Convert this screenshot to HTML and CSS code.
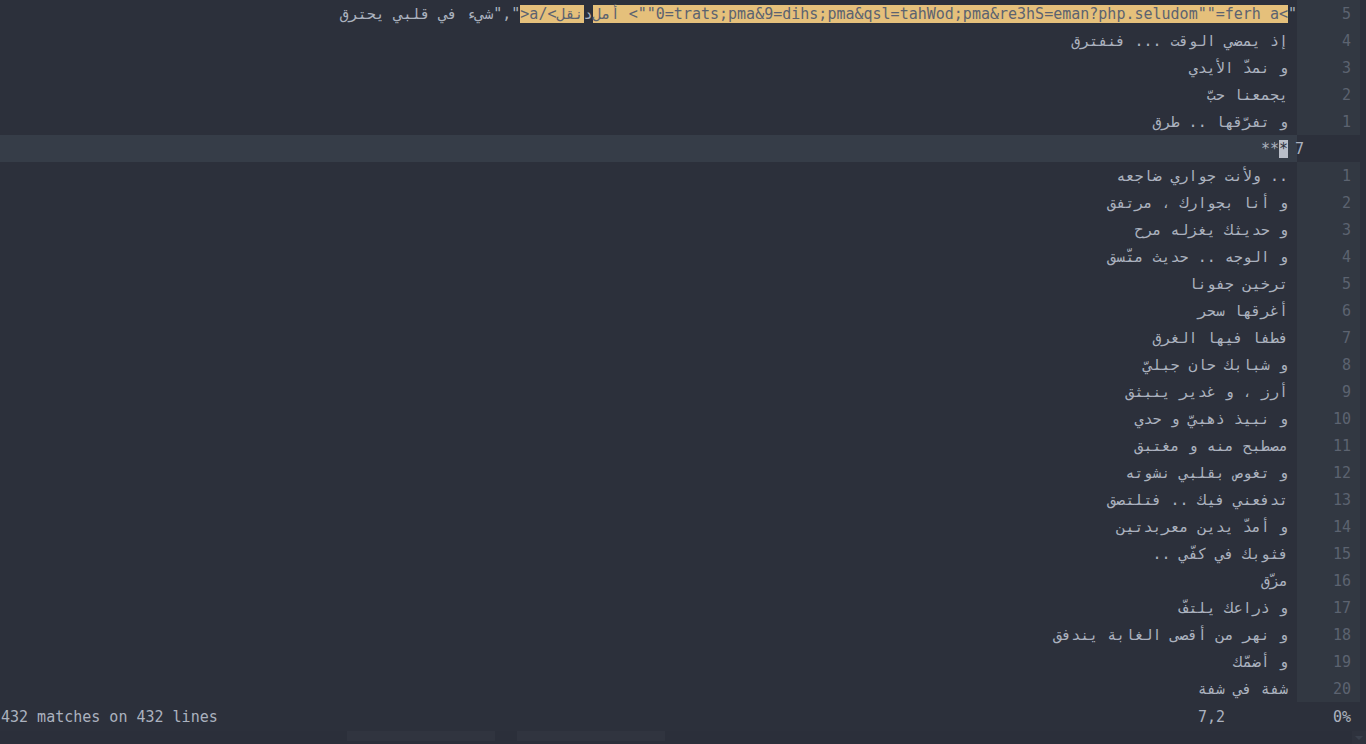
FILE: index.html
```html
<!DOCTYPE html>
<html lang="ar">
<head>
<meta charset="utf-8">
<title>vim</title>
<link rel="stylesheet" href="styles.css">
</head>
<body>
<div class="editor">
  <div class="row"><div class="text mixed"><span class="ar">شيء في قلبي يحترق</span>","<span class="hl">&gt;a/&lt;<span class="ar">نقل</span></span><span class="ar">د</span><span class="hl"><span class="ar">أمل</span> &lt;""0=trats;pma&amp;9=dihs;pma&amp;qsl=tahWod;pma&amp;re3hS=eman?php.seludom""=ferh a&lt;</span>"</div><div class="num">5</div></div>
  <div class="row"><div class="text"> إذ يمضي الوقت ... فنفترق</div><div class="num">4</div></div>
  <div class="row"><div class="text"> و نمدّ الأيدي</div><div class="num">3</div></div>
  <div class="row"><div class="text"> يجمعنا حبّ</div><div class="num">2</div></div>
  <div class="row"><div class="text"> و تفرّقها .. طرق</div><div class="num">1</div></div>
  <div class="row cursorline"><div class="text"> <span class="cursor">*</span>**</div><div class="num">7</div></div>
  <div class="row"><div class="text"> .. ولأنت جواري ضاجعه</div><div class="num">1</div></div>
  <div class="row"><div class="text"> و أنا بجوارك ، مرتفق</div><div class="num">2</div></div>
  <div class="row"><div class="text"> و حديثك يغزله مرح</div><div class="num">3</div></div>
  <div class="row"><div class="text"> و الوجه .. حديث متّسق</div><div class="num">4</div></div>
  <div class="row"><div class="text"> ترخين جفونا</div><div class="num">5</div></div>
  <div class="row"><div class="text"> أغرقها سحر</div><div class="num">6</div></div>
  <div class="row"><div class="text"> فطفا فيها الغرق</div><div class="num">7</div></div>
  <div class="row"><div class="text"> و شبابك حان جبليّ</div><div class="num">8</div></div>
  <div class="row"><div class="text"> أرز ، و غدير ينبثق</div><div class="num">9</div></div>
  <div class="row"><div class="text"> و نبيذ ذهبيّ و حدي</div><div class="num">10</div></div>
  <div class="row"><div class="text"> مصطبح منه و مغتبق</div><div class="num">11</div></div>
  <div class="row"><div class="text"> و تغوص بقلبي نشوته</div><div class="num">12</div></div>
  <div class="row"><div class="text"> تدفعني فيك .. فتلتصق</div><div class="num">13</div></div>
  <div class="row"><div class="text"> و أمدّ يدين معربدتين</div><div class="num">14</div></div>
  <div class="row"><div class="text"> فثوبك في كفّي ..</div><div class="num">15</div></div>
  <div class="row"><div class="text"> مزّق</div><div class="num">16</div></div>
  <div class="row"><div class="text"> و ذراعك يلتفّ</div><div class="num">17</div></div>
  <div class="row"><div class="text"> و نهر من أقصى الغابة يندفق</div><div class="num">18</div></div>
  <div class="row"><div class="text"> و أضمّك</div><div class="num">19</div></div>
  <div class="row"><div class="text"> شفة في شفة</div><div class="num">20</div></div>
</div>
<div class="status">
  <span class="msg">432 matches on 432 lines</span>
  <span class="pos">7,2</span>
  <span class="pct">0%</span>
</div>
<div class="bottom">
  <span class="tab tab1"></span>
  <span class="tab tab2"></span>
  <span class="spacer"></span>
  <span class="corner"><svg width="10" height="6" viewBox="0 0 10 6"><polygon points="1,1 9,1 5,5" fill="#3a404c"/></svg></span>
</div>
</body>
</html>
```

FILE: styles.css
```css
html, body {
  margin: 0;
  padding: 0;
}
body {
  width: 1366px;
  height: 744px;
  overflow: hidden;
  background: #2c303b;
  color: #abb2bf;
  font-family: "DejaVu Sans Mono", "Liberation Mono", monospace;
  font-size: 15px;
}
.editor {
  display: flex;
  flex-direction: column;
}
.row {
  display: flex;
  height: 27px;
  line-height: 28px;
}
.text {
  width: 1297px;
  flex: none;
  direction: rtl;
  text-align: right;
  white-space: pre;
  overflow: hidden;
}
.text.mixed {
  direction: ltr;
  unicode-bidi: isolate;
}
.ar {
  direction: rtl;
  unicode-bidi: isolate;
}
.hl {
  background: #e5c07b;
  color: #5c6370;
}
.num {
  width: 54px;
  padding-right: 9px;
  flex: none;
  text-align: right;
  background: #323842;
  color: #5c6370;
}
.cursorline .text {
  background: #363d48;
}
.cursorline .num {
  background: transparent;
  text-align: left;
  padding: 0 9px 0 0;
  text-indent: -2px;
  color: #abb2bf;
}
.cursor {
  background: #b9bec8;
  color: #2c303b;
}
.status {
  display: flex;
  height: 27px;
  padding-top: 2px;
  line-height: 27px;
  white-space: pre;
}
.msg {
  flex: 1;
  padding-left: 1px;
}
.pos {
  width: 135px;
}
.pct {
  width: 33px;
}
.bottom {
  display: flex;
  height: 13px;
  padding-left: 347px;
  gap: 22px;
  background: #2b2f3a;
}
.tab {
  height: 10px;
  width: 148px;
  background: #30343f;
}
.spacer {
  flex: 1;
}
.corner {
  width: 14px;
  height: 13px;
  display: flex;
  align-items: center;
  justify-content: center;
  background: #2e323d;
}
```
